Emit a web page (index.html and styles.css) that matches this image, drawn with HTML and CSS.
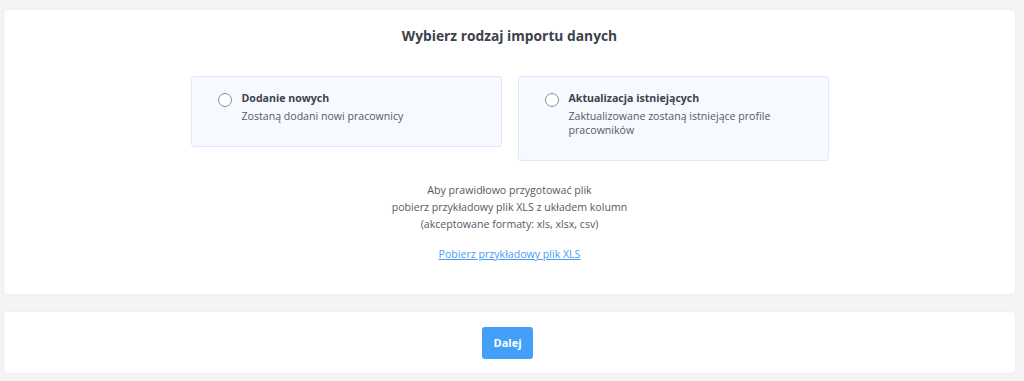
FILE: index.html
```html
<!DOCTYPE html>
<html lang="pl">
<head>
  <meta charset="UTF-8">
  <meta name="viewport" content="width=device-width, initial-scale=1.0">
  <title>Import danych</title>
  <link rel="stylesheet" href="styles.css">
</head>
<body>
  <div class="card import">
    <h2>Wybierz rodzaj importu danych</h2>

    <div class="options">
      <label class="option">
        <input type="radio" name="rodzaj" value="nowi">
        <span class="texts">
          <strong>Dodanie nowych</strong>
          <span>Zostaną dodani nowi pracownicy</span>
        </span>
      </label>
      <label class="option">
        <input type="radio" name="rodzaj" value="aktualizacja">
        <span class="texts">
          <strong>Aktualizacja istniejących</strong>
          <span>Zaktualizowane zostaną istniejące profile pracowników</span>
        </span>
      </label>
    </div>

    <p class="info">
      Aby prawidłowo przygotować plik<br>
      pobierz przykładowy plik XLS z układem kolumn<br>
      (akceptowane formaty: xls, xlsx, csv)
    </p>
    <a class="sample" href="#">Pobierz przykładowy plik XLS</a>
  </div>

  <div class="card actions">
    <button>Dalej</button>
  </div>
</body>
</html>
```

FILE: styles.css
```css
body {
  margin: 0;
  padding: 10px 9px 8px 4px;
  background: #f4f4f4;
  font-family: "Open Sans", Arial, sans-serif;
  color: #4a4f57;
}
.card {
  background: #fff;
  border-radius: 4px;
  box-shadow: 0 0 3px rgba(0,0,0,0.05);
}
.import {
  height: 284px;
  box-sizing: border-box;
  padding-top: 15px;
  text-align: center;
}
h2 {
  margin: 0;
  font-size: 13.8px;
  font-weight: 700;
  line-height: 22px;
  color: #3d424b;
}
.options {
  display: flex;
  justify-content: center;
  align-items: flex-start;
  gap: 16px;
  margin-top: 29px;
}
.option {
  display: flex;
  align-items: flex-start;
  width: 311px;
  box-sizing: border-box;
  padding: 13px 20px 23px 26px;
  background: #f6f9ff;
  border: 1px solid #e1e8fb;
  border-radius: 3px;
  text-align: left;
  cursor: pointer;
}
.option input {
  appearance: none;
  width: 14px;
  height: 14px;
  margin: 3px 10px 0 0;
  border: 1px solid #8a8d92;
  border-radius: 50%;
  background: #fff;
  flex-shrink: 0;
}
.texts {
  display: flex;
  flex-direction: column;
  font-size: 10.6px;
  line-height: 14px;
}
.texts strong {
  line-height: 17px;
  margin-bottom: 2px;
  color: #3d424b;
}
.texts span {
  color: #555a62;
}
.info {
  margin: 21px 0 0;
  font-size: 10.6px;
  line-height: 17px;
  color: #555a62;
}
.sample {
  display: inline-block;
  margin-top: 13px;
  font-size: 10.6px;
  line-height: 17px;
  color: #4a9cf5;
}
.actions {
  margin-top: 18px;
  height: 61px;
  display: flex;
  justify-content: center;
  align-items: center;
}
button {
  width: 51px;
  height: 32px;
  margin-right: 4px;
  background: #42a0f8;
  color: #fff;
  border: none;
  border-radius: 3px;
  font-family: inherit;
  font-size: 11px;
  font-weight: 700;
  cursor: pointer;
}
```
